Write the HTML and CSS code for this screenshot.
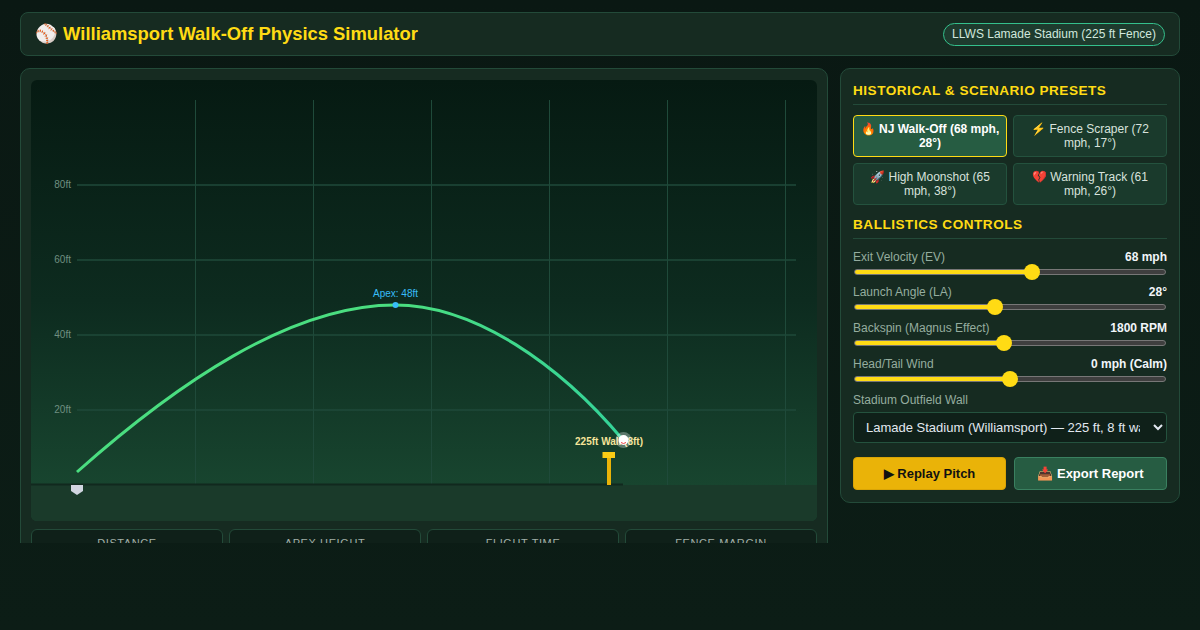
FILE: index.html
```html
<!DOCTYPE html>
<html lang="en">
<head>
  <meta charset="UTF-8">
  <title>Williamsport Walk-Off Physics Simulator</title>
  <link rel="stylesheet" href="styles.css">
</head>
<body>
<div class="app">

  <!-- header -->
  <header class="top-bar">
    <h1>⚾ Williamsport Walk-Off Physics Simulator</h1>
    <span class="stadium-badge">LLWS Lamade Stadium (225 ft Fence)</span>
  </header>

  <div class="main-grid">
    <!-- left: field + stats -->
    <section class="panel field-panel">
      <div class="field">
        <svg class="field-svg" width="786" height="441" viewBox="0 0 786 441">
          <defs>
            <linearGradient id="flightGrad" x1="0" y1="0" x2="1" y2="0">
              <stop offset="0" stop-color="#4ade80"/>
              <stop offset="0.6" stop-color="#4ade80"/>
              <stop offset="1" stop-color="#34d399"/>
            </linearGradient>
          </defs>
          <g class="grid-lines">
            <line x1="164.5" y1="20" x2="164.5" y2="405"/>
            <line x1="282.5" y1="20" x2="282.5" y2="405"/>
            <line x1="400.5" y1="20" x2="400.5" y2="405"/>
            <line x1="518.5" y1="20" x2="518.5" y2="405"/>
            <line x1="636.5" y1="20" x2="636.5" y2="405"/>
            <line x1="754.5" y1="20" x2="754.5" y2="405"/>
          </g>
          <g class="grid-lines grid-h">
            <line x1="46" y1="105" x2="765" y2="105"/>
            <line x1="46" y1="180" x2="765" y2="180"/>
            <line x1="46" y1="255" x2="765" y2="255"/>
            <line x1="46" y1="330" x2="765" y2="330"/>
          </g>
          <g class="y-labels">
            <text x="40" y="108">80ft</text>
            <text x="40" y="183">60ft</text>
            <text x="40" y="258">40ft</text>
            <text x="40" y="333">20ft</text>
          </g>
          <rect class="ground" x="0" y="405" width="786" height="36"/>
          <line class="ground-line" x1="0" y1="404.500" x2="592" y2="404.500"/>
          <path class="home-plate" d="M40 405h12v6l-6 4l-6-4z"/>
          <path class="flight" d="M46 392C144 305 259 225 364 225C444 225 529 285 592 360"/>
          <circle class="apex-dot" cx="364.500" cy="225" r="3"/>
          <text class="apex-label" x="364.500" y="217">Apex: 48ft</text>
          <rect class="wall-post" x="576" y="372" width="4" height="33"/>
          <rect class="wall-cap" x="571.500" y="372" width="12.500" height="6"/>
          <text class="wall-label" x="578" y="365">225ft Wall (8ft)</text>
          <circle class="ball-halo" cx="592.500" cy="360" r="8"/>
          <circle class="ball" cx="592.500" cy="360" r="5"/>
          <path class="ball-seam" d="M590 362.500q2.500 2 5 0"/>
        </svg>
      </div>
      <div class="stat-row">
        <div class="stat-card"><div class="stat-label">DISTANCE</div><div class="stat-value">231 ft</div></div>
        <div class="stat-card"><div class="stat-label">APEX HEIGHT</div><div class="stat-value">48 ft</div></div>
        <div class="stat-card"><div class="stat-label">FLIGHT TIME</div><div class="stat-value">3.6 s</div></div>
        <div class="stat-card"><div class="stat-label">FENCE MARGIN</div><div class="stat-value">+6 ft</div></div>
      </div>
    </section>

    <!-- right: controls -->
    <aside class="panel control-panel">
      <h2>HISTORICAL &amp; SCENARIO PRESETS</h2>
      <div class="preset-grid">
        <button class="preset active">🔥 NJ Walk-Off (68 mph, 28°)</button>
        <button class="preset">⚡ Fence Scraper (72 mph, 17°)</button>
        <button class="preset">🚀 High Moonshot (65 mph, 38°)</button>
        <button class="preset">💔 Warning Track (61 mph, 26°)</button>
      </div>

      <h2 class="controls-title">BALLISTICS CONTROLS</h2>
      <div class="control">
        <div class="control-head"><label>Exit Velocity (EV)</label><span>68 mph</span></div>
        <input type="range" min="0" max="100" step="0.5" value="57.500" style="--fill:57%">
      </div>
      <div class="control">
        <div class="control-head"><label>Launch Angle (LA)</label><span>28°</span></div>
        <input type="range" min="0" max="100" step="0.5" value="45" style="--fill:45%">
      </div>
      <div class="control">
        <div class="control-head"><label>Backspin (Magnus Effect)</label><span>1800 RPM</span></div>
        <input type="range" min="0" max="100" step="0.5" value="48" style="--fill:48%">
      </div>
      <div class="control">
        <div class="control-head"><label>Head/Tail Wind</label><span>0 mph (Calm)</span></div>
        <input type="range" min="0" max="100" step="0.5" value="50" style="--fill:50%">
      </div>

      <div class="wall-select">
        <label>Stadium Outfield Wall</label>
        <select>
          <option>Lamade Stadium (Williamsport) — 225 ft, 8 ft wall</option>
        </select>
      </div>

      <div class="action-row">
        <button class="btn-replay">▶ Replay Pitch</button>
        <button class="btn-export">📥 Export Report</button>
      </div>
    </aside>
  </div>
</div>
</body>
</html>
```

FILE: styles.css
```css
/* reset */
* { margin: 0; padding: 0; box-sizing: border-box; }
body {
  font-family: "Liberation Sans", Arial, sans-serif;
  background: linear-gradient(180deg, #0a1813 0%, #0c1d16 100%);
  color: #e2e8f0;
  height: 630px;
  overflow: hidden;
}

.app {
  height: 543px;
  overflow: hidden;
  padding: 12px 20px 0;
}

/* header */
.top-bar {
  display: flex;
  justify-content: space-between;
  align-items: center;
  height: 44px;
  padding: 0 14px;
  background: #162b21;
  border: 1px solid #234a39;
  border-radius: 8px;
  margin-bottom: 12px;
}
.top-bar h1 {
  font-size: 18.4px;
  font-weight: bold;
  color: #ffdb14;
}
.stadium-badge {
  font-size: 12px;
  line-height: 21px;
  padding: 0 8px;
  color: #d1e7dd;
  background: #1e3b2e;
  border: 1px solid #34c08c;
  border-radius: 12px;
}

/* layout */
.main-grid {
  display: grid;
  grid-template-columns: 808px 340px;
  gap: 12px;
  align-items: start;
}
.panel {
  background: #162b21;
  border: 1px solid #234a39;
  border-radius: 10px;
}
.field-panel { padding: 11px 10px; }
.control-panel { padding: 14px 12px 12px; }

/* field */
.field {
  height: 441px;
  border-radius: 6px;
  overflow: hidden;
  background: linear-gradient(180deg, #061a12 0%, #0d2b1f 50%, #1a4a32 100%);
}
.field-svg { display: block; }
.grid-lines line { stroke: #1f4a3a; stroke-width: 1; }
.grid-h line { stroke-width: 1.5; }
.y-labels text { fill: #6f8f80; font-size: 10px; text-anchor: end; }
.ground { fill: #1a3a2a; }
.ground-line { stroke: #11291e; stroke-width: 2; }
.home-plate { fill: #d1d5e0; }
.flight { fill: none; stroke: url(#flightGrad); stroke-width: 3; }
.apex-dot { fill: #38bdf8; }
.apex-label { fill: #38bdf8; font-size: 10px; text-anchor: middle; }
.wall-post { fill: #eab308; }
.wall-cap { fill: #facc15; }
.wall-label { fill: #f5e49a; font-size: 10px; font-weight: bold; text-anchor: middle; }
.ball-halo { fill: #fff; opacity: 0.3; }
.ball { fill: #fff; }
.ball-seam { fill: none; stroke: #ef4444; stroke-width: 1; }

/* stats */
.stat-row {
  display: grid;
  grid-template-columns: repeat(4, 1fr);
  gap: 6px;
  margin-top: 8px;
}
.stat-card {
  background: #0f2019;
  border: 1px solid #234a39;
  border-radius: 6px;
  padding: 7px 8px;
  text-align: center;
}
.stat-label {
  font-size: 11px;
  letter-spacing: 0.6px;
  color: #a3b0a8;
}
.stat-value { font-size: 18px; font-weight: bold; color: #fff; }

/* controls */
.control-panel h2 {
  font-size: 13.6px;
  line-height: 16px;
  font-weight: bold;
  letter-spacing: 0.5px;
  color: #ffdb14;
  padding-bottom: 5px;
  margin-bottom: 10px;
  border-bottom: 1px solid #234a39;
}
.control-panel .controls-title { margin-bottom: 10.6px; }
.preset-grid {
  display: grid;
  grid-template-columns: 1fr 1fr;
  gap: 6px;
  margin-bottom: 12px;
}
button { font-family: inherit; cursor: pointer; }
.preset {
  font-size: 12px;
  line-height: 14px;
  height: 42px;
  padding: 6px;
  color: #d8e2dc;
  background: #1a3a2c;
  border: 1px solid #24523e;
  border-radius: 4px;
}
.preset.active {
  font-weight: bold;
  color: #fff;
  background: #265c42;
  border-color: #ffdb14;
}

.control { height: 35.67px; }
.control-head {
  display: flex;
  justify-content: space-between;
  font-size: 12px;
  line-height: 14px;
}
.control-head label { color: #95ad9f; }
.control-head span { font-weight: bold; color: #f1f5f9; }

input[type="range"] {
  -webkit-appearance: none;
  appearance: none;
  display: block;
  width: 100%;
  height: 16px;
  padding: 0 1px;
  background: transparent;
}
input[type="range"]::-webkit-slider-runnable-track {
  height: 6px;
  border: 1px solid #777;
  border-radius: 3px;
  background: linear-gradient(90deg, #ffdb14 var(--fill), #3f3f3f var(--fill));
}
input[type="range"]::-webkit-slider-thumb {
  -webkit-appearance: none;
  width: 16px;
  height: 16px;
  margin-top: -6px;
  border-radius: 50%;
  background: #ffdb14;
}

.wall-select { margin-top: 0.5px; }
.wall-select label {
  display: block;
  font-size: 12px;
  line-height: 14px;
  color: #95ad9f;
  margin-bottom: 5px;
}
.wall-select select {
  display: block;
  width: 100%;
  height: 31px;
  padding: 0 10px 0 8px;
  font-family: inherit;
  font-size: 13px;
  color: #e2e8f0;
  background: #0f2019;
  border: 1px solid #24523e;
  border-radius: 4px;
}

.action-row {
  display: grid;
  grid-template-columns: 1fr 1fr;
  gap: 8px;
  margin-top: 14px;
}
.action-row button {
  height: 33px;
  font-size: 13px;
  font-weight: bold;
  border-radius: 4px;
}
.btn-replay { color: #111; background: #eab308; border: 1px solid #d9a406; }
.btn-export { color: #fff; background: #265c42; border: 1px solid #3a8060; }
```
